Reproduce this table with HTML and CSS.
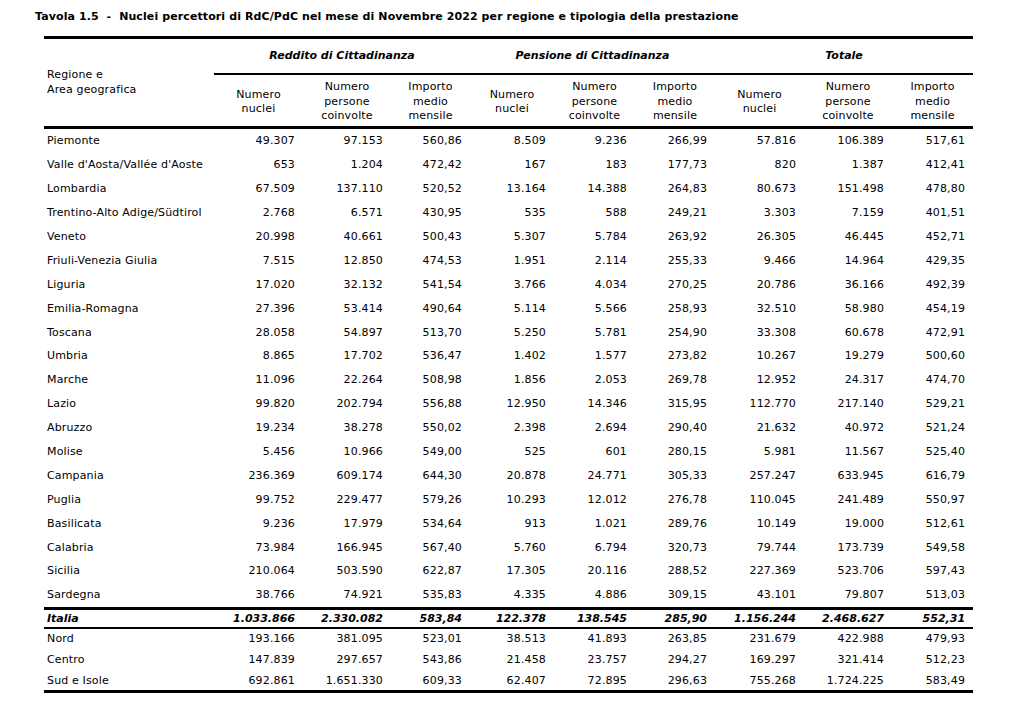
FILE: index.html
```html
<!DOCTYPE html>
<html lang="it">
<head>
<meta charset="utf-8">
<title>Tavola 1.5</title>
<link rel="stylesheet" href="styles.css">
</head>
<body>
<div class="page">
  <h1 class="title">Tavola 1.5 &nbsp;-&nbsp; Nuclei percettori di RdC/PdC nel mese di Novembre 2022 per regione e tipologia della prestazione</h1>
  <table class="tab">
    <colgroup>
      <col class="c-reg">
      <col class="c89"><col class="c88"><col class="c79">
      <col class="c84"><col class="c81"><col class="c80">
      <col class="c89"><col class="c88"><col class="c81">
    </colgroup>
    <thead>
      <tr class="hrow1">
        <th class="reg-h" rowspan="2">Regione e<br>Area geografica</th>
        <th class="grp" colspan="3">Reddito di Cittadinanza</th>
        <th class="grp" colspan="3">Pensione di Cittadinanza</th>
        <th class="grp" colspan="3">Totale</th>
      </tr>
      <tr class="hrow2">
        <th class="sub">Numero<br>nuclei</th>
        <th class="sub">Numero<br>persone<br>coinvolte</th>
        <th class="sub">Importo<br>medio<br>mensile</th>
        <th class="sub">Numero<br>nuclei</th>
        <th class="sub">Numero<br>persone<br>coinvolte</th>
        <th class="sub">Importo<br>medio<br>mensile</th>
        <th class="sub">Numero<br>nuclei</th>
        <th class="sub">Numero<br>persone<br>coinvolte</th>
        <th class="sub">Importo<br>medio<br>mensile</th>
      </tr>
    </thead>
    <tbody class="regions">
      <tr><td>Piemonte</td><td>49.307</td><td>97.153</td><td>560,86</td><td>8.509</td><td>9.236</td><td>266,99</td><td>57.816</td><td>106.389</td><td>517,61</td></tr>
      <tr><td>Valle d'Aosta/Vallée d'Aoste</td><td>653</td><td>1.204</td><td>472,42</td><td>167</td><td>183</td><td>177,73</td><td>820</td><td>1.387</td><td>412,41</td></tr>
      <tr><td>Lombardia</td><td>67.509</td><td>137.110</td><td>520,52</td><td>13.164</td><td>14.388</td><td>264,83</td><td>80.673</td><td>151.498</td><td>478,80</td></tr>
      <tr><td>Trentino-Alto Adige/Südtirol</td><td>2.768</td><td>6.571</td><td>430,95</td><td>535</td><td>588</td><td>249,21</td><td>3.303</td><td>7.159</td><td>401,51</td></tr>
      <tr><td>Veneto</td><td>20.998</td><td>40.661</td><td>500,43</td><td>5.307</td><td>5.784</td><td>263,92</td><td>26.305</td><td>46.445</td><td>452,71</td></tr>
      <tr><td>Friuli-Venezia Giulia</td><td>7.515</td><td>12.850</td><td>474,53</td><td>1.951</td><td>2.114</td><td>255,33</td><td>9.466</td><td>14.964</td><td>429,35</td></tr>
      <tr><td>Liguria</td><td>17.020</td><td>32.132</td><td>541,54</td><td>3.766</td><td>4.034</td><td>270,25</td><td>20.786</td><td>36.166</td><td>492,39</td></tr>
      <tr><td>Emilia-Romagna</td><td>27.396</td><td>53.414</td><td>490,64</td><td>5.114</td><td>5.566</td><td>258,93</td><td>32.510</td><td>58.980</td><td>454,19</td></tr>
      <tr><td>Toscana</td><td>28.058</td><td>54.897</td><td>513,70</td><td>5.250</td><td>5.781</td><td>254,90</td><td>33.308</td><td>60.678</td><td>472,91</td></tr>
      <tr><td>Umbria</td><td>8.865</td><td>17.702</td><td>536,47</td><td>1.402</td><td>1.577</td><td>273,82</td><td>10.267</td><td>19.279</td><td>500,60</td></tr>
      <tr><td>Marche</td><td>11.096</td><td>22.264</td><td>508,98</td><td>1.856</td><td>2.053</td><td>269,78</td><td>12.952</td><td>24.317</td><td>474,70</td></tr>
      <tr><td>Lazio</td><td>99.820</td><td>202.794</td><td>556,88</td><td>12.950</td><td>14.346</td><td>315,95</td><td>112.770</td><td>217.140</td><td>529,21</td></tr>
      <tr><td>Abruzzo</td><td>19.234</td><td>38.278</td><td>550,02</td><td>2.398</td><td>2.694</td><td>290,40</td><td>21.632</td><td>40.972</td><td>521,24</td></tr>
      <tr><td>Molise</td><td>5.456</td><td>10.966</td><td>549,00</td><td>525</td><td>601</td><td>280,15</td><td>5.981</td><td>11.567</td><td>525,40</td></tr>
      <tr><td>Campania</td><td>236.369</td><td>609.174</td><td>644,30</td><td>20.878</td><td>24.771</td><td>305,33</td><td>257.247</td><td>633.945</td><td>616,79</td></tr>
      <tr><td>Puglia</td><td>99.752</td><td>229.477</td><td>579,26</td><td>10.293</td><td>12.012</td><td>276,78</td><td>110.045</td><td>241.489</td><td>550,97</td></tr>
      <tr><td>Basilicata</td><td>9.236</td><td>17.979</td><td>534,64</td><td>913</td><td>1.021</td><td>289,76</td><td>10.149</td><td>19.000</td><td>512,61</td></tr>
      <tr><td>Calabria</td><td>73.984</td><td>166.945</td><td>567,40</td><td>5.760</td><td>6.794</td><td>320,73</td><td>79.744</td><td>173.739</td><td>549,58</td></tr>
      <tr><td>Sicilia</td><td>210.064</td><td>503.590</td><td>622,87</td><td>17.305</td><td>20.116</td><td>288,52</td><td>227.369</td><td>523.706</td><td>597,43</td></tr>
      <tr><td>Sardegna</td><td>38.766</td><td>74.921</td><td>535,83</td><td>4.335</td><td>4.886</td><td>309,15</td><td>43.101</td><td>79.807</td><td>513,03</td></tr>
    </tbody>
    <tbody class="total">
      <tr><td>Italia</td><td>1.033.866</td><td>2.330.082</td><td>583,84</td><td>122.378</td><td>138.545</td><td>285,90</td><td>1.156.244</td><td>2.468.627</td><td>552,31</td></tr>
    </tbody>
    <tbody class="areas">
      <tr class="r-nord"><td>Nord</td><td>193.166</td><td>381.095</td><td>523,01</td><td>38.513</td><td>41.893</td><td>263,85</td><td>231.679</td><td>422.988</td><td>479,93</td></tr>
      <tr class="r-centro"><td>Centro</td><td>147.839</td><td>297.657</td><td>543,86</td><td>21.458</td><td>23.757</td><td>294,27</td><td>169.297</td><td>321.414</td><td>512,23</td></tr>
      <tr class="r-sud"><td>Sud e Isole</td><td>692.861</td><td>1.651.330</td><td>609,33</td><td>62.407</td><td>72.895</td><td>296,63</td><td>755.268</td><td>1.724.225</td><td>583,49</td></tr>
    </tbody>
  </table>
</div>
</body>
</html>
```

FILE: styles.css
```css
html, body {
  margin: 0;
  padding: 0;
  background: #ffffff;
}

body {
  font-family: "DejaVu Sans", Verdana, sans-serif;
  font-size: 11px;
  color: #000;
}

.page {
  padding: 10px 0 0 35px;
}

.title {
  margin: 0;
  font-family: "DejaVu Sans", Verdana, sans-serif;
  font-weight: bold;
  font-size: 11px;
  line-height: 14px;
  letter-spacing: 0.1px;
  white-space: nowrap;
}

.tab {
  margin: 12px 0 0 9px;
  border-collapse: separate;
  border-spacing: 0;
  table-layout: fixed;
  width: 929px;
}

.c-reg { width: 170px; }
.c89 { width: 89px; }
.c88 { width: 88px; }
.c79 { width: 79px; }
.c84 { width: 84px; }
.c81 { width: 81px; }
.c80 { width: 80px; }

th {
  font-weight: normal;
  padding: 0;
  line-height: 14.5px;
  letter-spacing: 0.15px;
}

.reg-h {
  text-align: left;
  padding: 0 0 0 3px;
  border-top: 3px solid #000;
  border-bottom: 3px solid #000;
  vertical-align: middle;
}

.grp {
  font-weight: bold;
  font-style: italic;
  letter-spacing: 0;
  text-align: center;
  height: 33px;
  padding-top: 1px;
  border-top: 3px solid #000;
  border-bottom: 2px solid #000;
  vertical-align: middle;
  box-sizing: content-box;
}

.hrow2 .sub {
  text-align: center;
  height: 48px;
  padding-top: 3px;
  border-bottom: 3px solid #000;
  vertical-align: middle;
  box-sizing: content-box;
}

td {
  padding: 0 8px 0 0;
  text-align: right;
  white-space: nowrap;
  vertical-align: middle;
  letter-spacing: 0.15px;
}

td:first-child {
  text-align: left;
  padding: 0 0 0 3px;
}

.regions td {
  height: 23.9px;
  padding-top: 0;
  box-sizing: border-box;
}

.total td {
  font-weight: bold;
  font-style: italic;
  letter-spacing: 0;
  height: 17px;
  border-top: 3px solid #000;
  border-bottom: 2px solid #000;
  box-sizing: content-box;
}

.areas td {
  box-sizing: border-box;
}

.r-nord td { height: 20px; }
.r-centro td { height: 21px; }
.r-sud td {
  height: 19px;
  padding-top: 1px;
  border-bottom: 3px solid #000;
  box-sizing: content-box;
}
```
